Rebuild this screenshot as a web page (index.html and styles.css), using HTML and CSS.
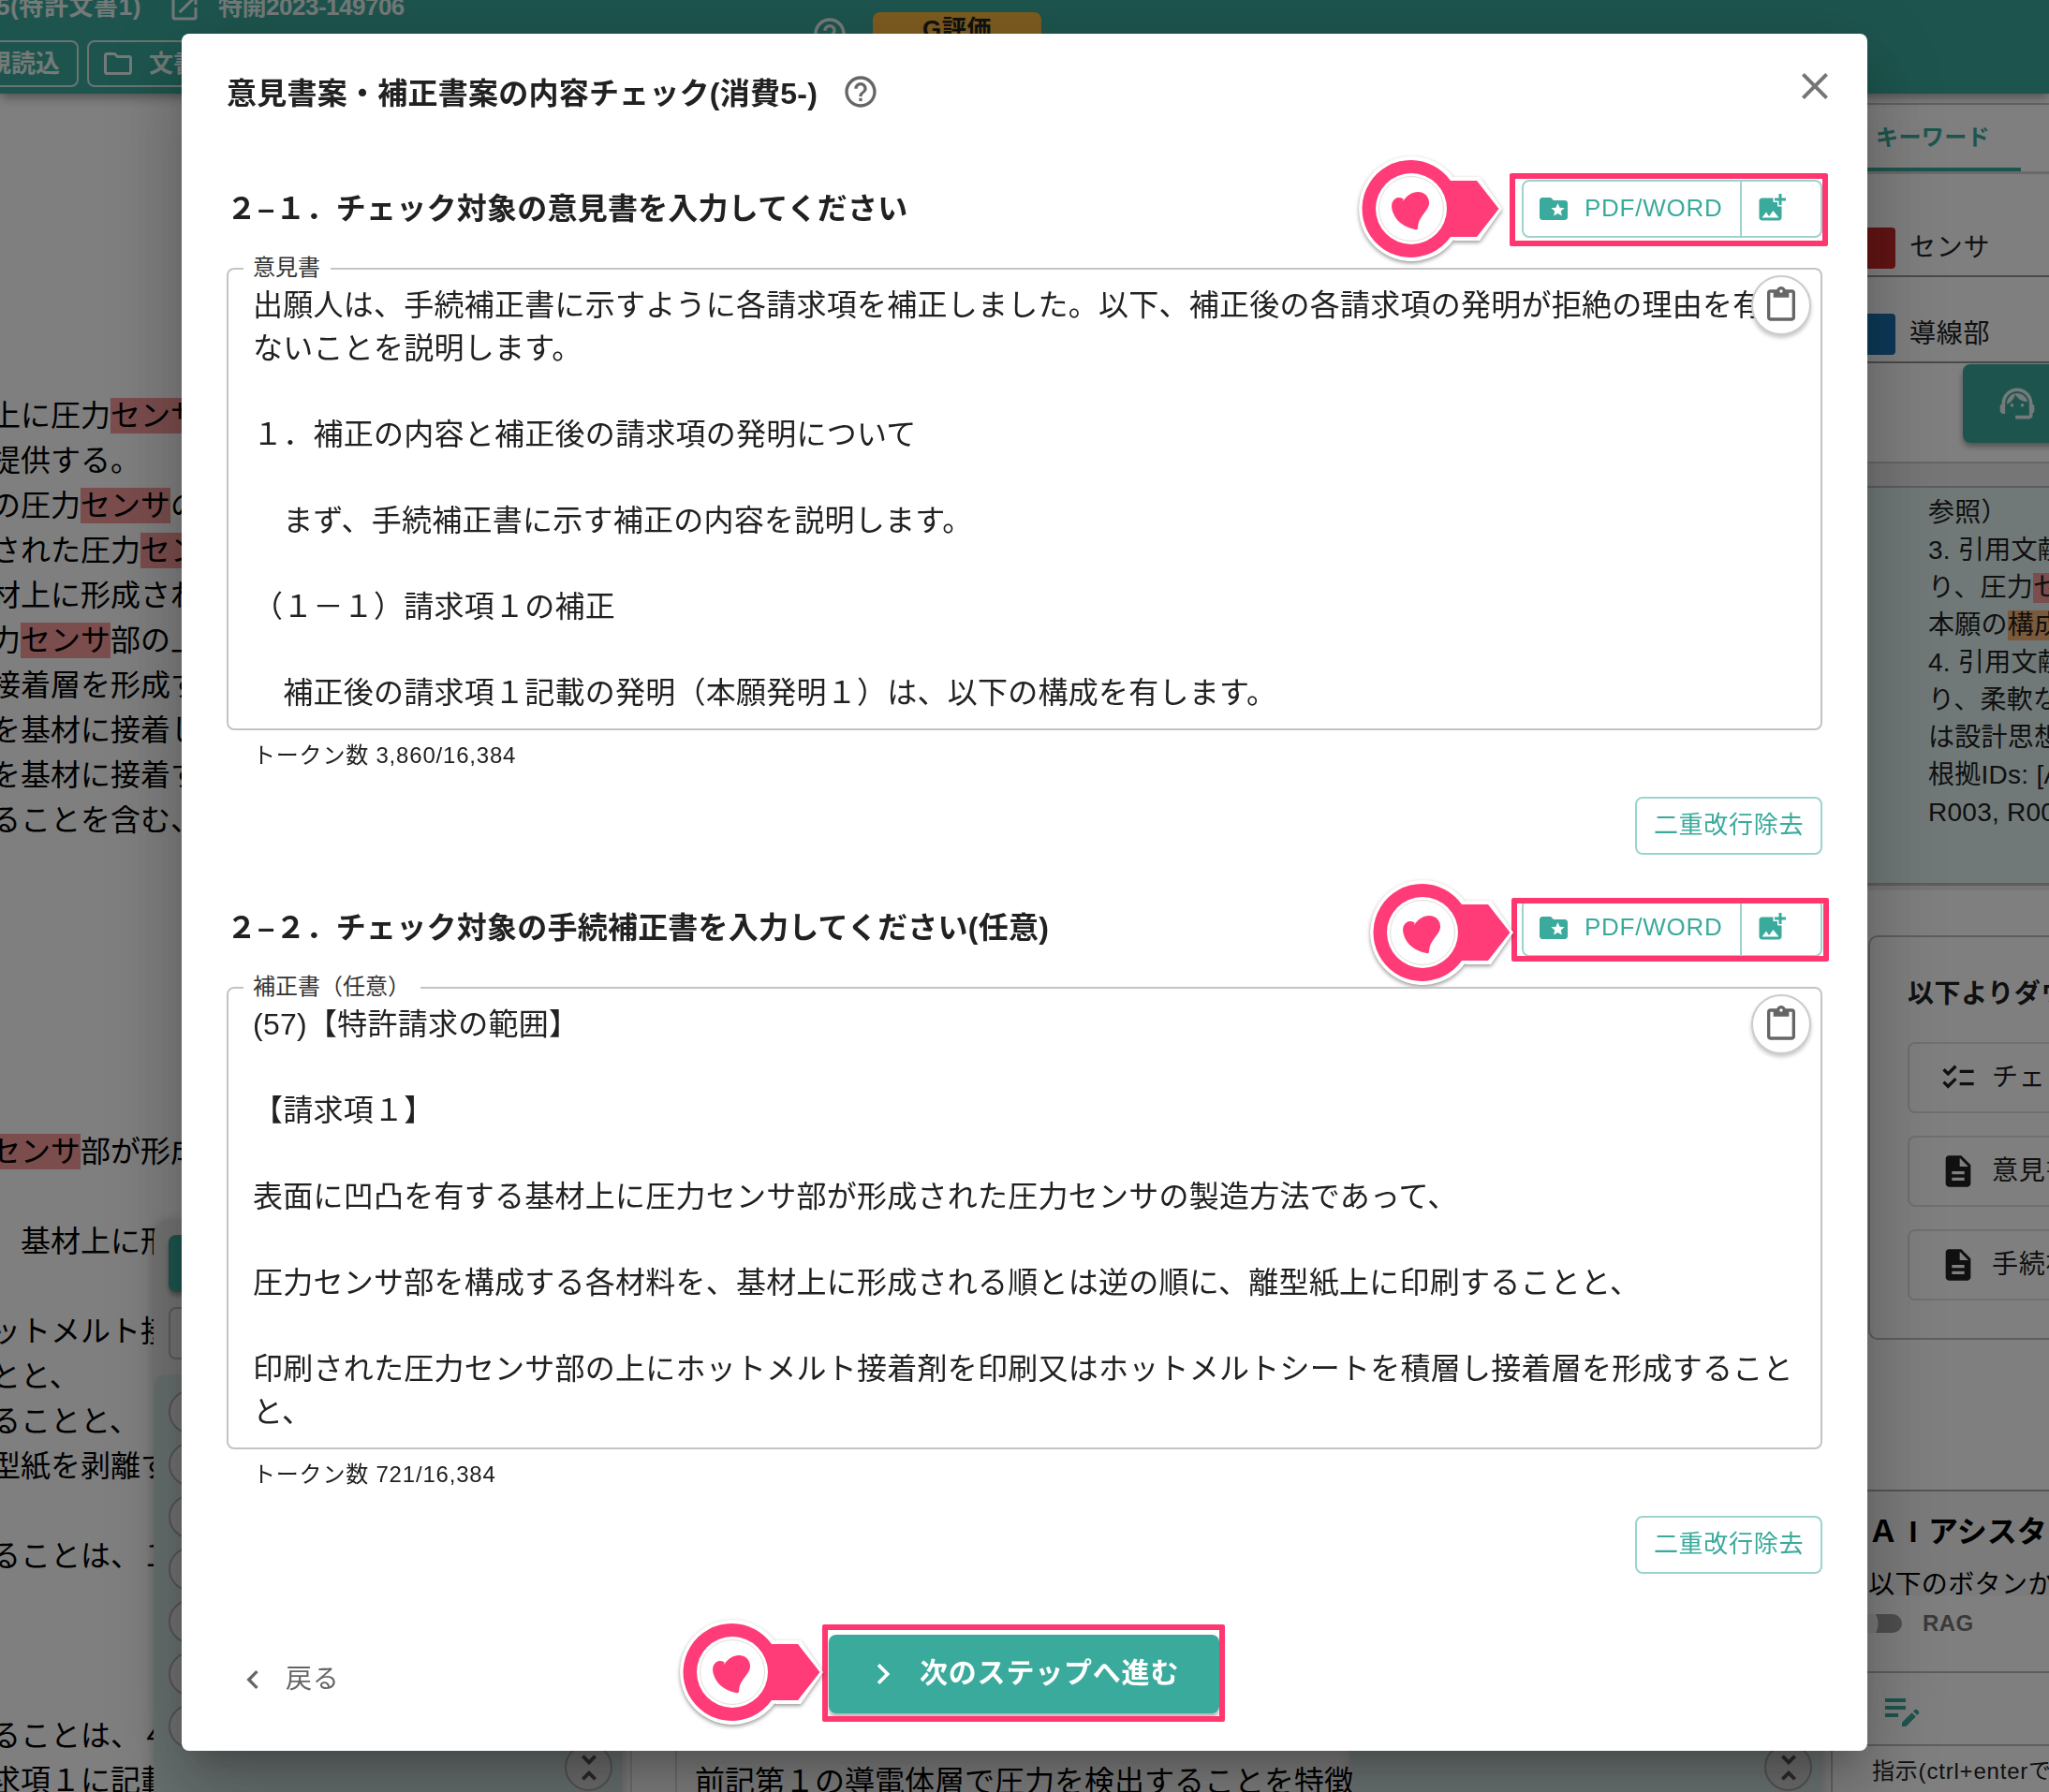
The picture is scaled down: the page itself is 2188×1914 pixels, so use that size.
FILE: index.html
```html
<!DOCTYPE html>
<html lang="ja">
<head>
    <meta charset="UTF-8">
    <title>意見書案・補正書案の内容チェック</title>
    <link rel="stylesheet" href="styles.css">
</head>
<body>
    <!-- アイコン定義 -->
    <svg class="defs" width="0" height="0">
        <symbol id="i-help" viewBox="0 0 24 24"><path d="M11 18h2v-2h-2zm1-16C6.48 2 2 6.48 2 12s4.48 10 10 10 10-4.48 10-10S17.52 2 12 2m0 18c-4.41 0-8-3.59-8-8s3.59-8 8-8 8 3.59 8 8-3.59 8-8 8m0-14c-2.21 0-4 1.79-4 4h2c0-1.1.9-2 2-2s2 .9 2 2c0 2-3 1.75-3 5h2c0-2.25 3-2.5 3-5 0-2.21-1.79-4-4-4"/></symbol>
        <symbol id="i-close" viewBox="0 0 24 24"><path d="M19 6.41 17.59 5 12 10.59 6.41 5 5 6.41 10.59 12 5 17.59 6.41 19 12 13.41 17.59 19 19 17.59 13.41 12z"/></symbol>
        <symbol id="i-paste" viewBox="0 0 24 24"><path d="M19 2h-4.18C14.4.84 13.3 0 12 0S9.6.84 9.18 2H5c-1.1 0-2 .9-2 2v16c0 1.1.9 2 2 2h14c1.1 0 2-.9 2-2V4c0-1.1-.9-2-2-2m-7 0c.55 0 1 .45 1 1s-.45 1-1 1-1-.45-1-1 .45-1 1-1m7 18H5V4h2v3h10V4h2z"/></symbol>
        <symbol id="i-folder-star" viewBox="0 0 24 24"><path d="M20 6h-8l-2-2H4c-1.1 0-1.99.9-1.99 2L2 18c0 1.1.9 2 2 2h16c1.1 0 2-.9 2-2V8c0-1.1-.9-2-2-2m-2.06 11L15 15.28 12.06 17l.78-3.33-2.59-2.24 3.41-.29L15 8l1.34 3.14 3.41.29-2.59 2.24z"/></symbol>
        <symbol id="i-add-photo" viewBox="0 0 24 24"><path d="M19 7v2.99s-1.99.01-2 0V7h-3s.01-1.99 0-2h3V2h2v3h3v2zm-3 4V8h-3V5H5c-1.1 0-2 .9-2 2v12c0 1.1.9 2 2 2h12c1.1 0 2-.9 2-2v-8zM5 19l3-4 2 3 3-4 4 5z"/></symbol>
        <symbol id="i-left" viewBox="0 0 24 24"><path d="M15.41 7.41 14 6l-6 6 6 6 1.41-1.41L10.83 12z"/></symbol>
        <symbol id="i-right" viewBox="0 0 24 24"><path d="M10 6 8.59 7.41 13.17 12l-4.58 4.59L10 18l6-6z"/></symbol>
        <symbol id="i-folder" viewBox="0 0 24 24"><path d="m9.17 6 2 2H20v10H4V6zM10 4H4c-1.1 0-1.99.9-1.99 2L2 18c0 1.1.9 2 2 2h16c1.1 0 2-.9 2-2V8c0-1.1-.9-2-2-2h-8z"/></symbol>
        <symbol id="i-open" viewBox="0 0 24 24"><path d="M19 19H5V5h7V3H5c-1.11 0-2 .9-2 2v14c0 1.1.89 2 2 2h14c1.1 0 2-.9 2-2v-7h-2zM14 3v2h3.59l-9.83 9.83 1.41 1.41L19 6.41V10h2V3z"/></symbol>
        <symbol id="i-agent" viewBox="0 0 24 24"><path d="M21 12.22C21 6.73 16.74 3 12 3c-4.69 0-9 3.65-9 9.28-.6.34-1 .98-1 1.72v2c0 1.1.9 2 2 2h1v-6.1c0-3.87 3.13-7 7-7s7 3.13 7 7V19h-8v2h8c1.1 0 2-.9 2-2v-1.22c.59-.31 1-.92 1-1.64v-2.3c0-.7-.41-1.31-1-1.62"/><circle cx="9" cy="13" r="1"/><circle cx="15" cy="13" r="1"/><path d="M18 11.03C17.52 8.18 15.04 6 12.05 6c-3.03 0-6.29 2.51-6.03 6.45 2.47-1.01 4.33-3.21 4.86-5.89 1.31 2.63 4 4.44 7.12 4.47"/></symbol>
        <symbol id="i-checklist" viewBox="0 0 24 24"><path d="M22 7h-9v2h9zm0 8h-9v2h9zM5.54 11 2 7.46l1.41-1.41 2.12 2.12 4.24-4.24 1.41 1.41zm0 8L2 15.46l1.41-1.41 2.12 2.12 4.24-4.24 1.41 1.41z"/></symbol>
        <symbol id="i-doc" viewBox="0 0 24 24"><path d="M14 2H6c-1.1 0-1.99.9-1.99 2L4 20c0 1.1.89 2 1.99 2H18c1.1 0 2-.9 2-2V8zm2 16H8v-2h8zm0-4H8v-2h8zm-3-5V3.5L18.5 9z"/></symbol>
        <symbol id="i-edit-note" viewBox="0 0 24 24"><path d="M3 10h11v2H3zm0-2h11V6H3zm0 8h7v-2H3zm15.01-3.13.71-.71c.39-.39 1.02-.39 1.41 0l.71.71c.39.39.39 1.02 0 1.41l-.71.71zm-.71.71-5.3 5.3V21h2.12l5.3-5.3z"/></symbol>
        <symbol id="i-unfold" viewBox="0 0 24 24"><path d="M7.41 18.59 8.83 20 12 16.83 15.17 20l1.41-1.41L12 14zm9.18-13.18L15.17 4 12 7.17 8.83 4 7.41 5.41 12 10z"/></symbol>
        <symbol id="i-pin" viewBox="0 0 164 120">
            <path d="M60 4A56 56 0 1 0 105 93.500L107 94H133L157 60 133 26H107L105 26.500A56 56 0 0 0 60 4z" fill="#fff"/>
            <path d="M60 8A52 52 0 1 0 102 90H130L153.500 60 130 30H102A52 52 0 0 0 60 8z" fill="#ff3b78"/>
            <circle cx="60" cy="60" r="38" fill="#fff"/>
            <circle cx="60" cy="60" r="34.500" fill="none" stroke="#ddd" stroke-width="1"/>
            <path d="M51.500 51.500C55 46 61 42 67 42 75 42 79.500 48 79 54.500 78.500 62 68.500 68 67.300 77.500 67 80.500 67.200 82.300 65 82.200 57 81 48.500 76.500 44 70.500 40.500 65.500 38.500 59.500 39.200 55.500 40 50.500 43.500 48 47 48 49.500 48 51.800 49 52 50.500 50.800 50.300 50 51 51.500 51.500z" fill="#ff3b78"/>
        </symbol>
    </svg>

    <div class="app">
        <header class="header">
            <div class="header-row">
                <b>5(特許文書1)</b>
                <svg class="ic open"><use href="#i-open"/></svg>
                <b class="pub">特開2023-149706</b>
                <svg class="ic help"><use href="#i-help"/></svg>
                <div class="g-btn">G評価</div>
            </div>
            <div class="header-btns">
                <div class="h-btn first">規読込</div>
                <div class="h-btn"><svg class="ic"><use href="#i-folder"/></svg>文書</div>
            </div>
        </header>

        <main class="main">
            <section class="doc">
                <div class="doc-text">上に圧力<mark>センサ</mark>
提供する。
の圧力<mark>センサ</mark>の
された圧力<mark>センサ</mark>
材上に形成され
力<mark>センサ</mark>部の上
接着層を形成す
を基材に接着し
を基材に接着す
ることを含む、</div>
                <div class="doc-text claims"><mark>センサ</mark>部が形成

　基材上に形成

ットメルト接着
とと、
ることと、
型紙を剥離する

ることは、１



ることは、４
求項１に記載</div>
                <!-- 左の浮動パネル -->
                <div class="float left">
                    <div class="float-head">
                        <div class="float-btn"></div>
                        <div class="float-input"></div>
                    </div>
                    <div class="float-body">
                        <i></i><i></i><i></i><i></i><i></i><i></i><i></i>
                    </div>
                    <div class="fold"><svg class="ic"><use href="#i-unfold"/></svg></div>
                </div>
            </section>

            <section class="doc2">
                <p>前記第１の導電体層で圧力を検出することを特徴</p>
                <div class="float mid">
                    <div class="fold"><svg class="ic"><use href="#i-unfold"/></svg></div>
                </div>
            </section>

            <aside class="side">
                <div class="tab">キーワード</div>
                <div class="kw-list">
                    <div class="kw"><span class="chip red"></span>センサ</div>
                    <div class="kw"><span class="chip blue"></span>導線部</div>
                </div>
                <div class="agent"><div class="agent-btn"><svg class="ic"><use href="#i-agent"/></svg></div></div>
                <div class="band"></div>
                <div class="answer">参照）
3. 引用文献
り、圧力<mark>センサ</mark>
本願の<mark class="orange">構成</mark>
4. 引用文献
り、柔軟な
は設計思想
根拠IDs: [A001
R003, R004</div>
                <div class="band thin"></div>
                <div class="dl">
                    <b>以下よりダウン</b>
                    <div class="dl-btn"><svg class="ic"><use href="#i-checklist"/></svg>チェック</div>
                    <div class="dl-btn"><svg class="ic"><use href="#i-doc"/></svg>意見書</div>
                    <div class="dl-btn"><svg class="ic"><use href="#i-doc"/></svg>手続補正</div>
                </div>
                <div class="assist">
                    <b>Ａ<span class="wide">I</span>アシスタ</b>
                    <p>以下のボタンから</p>
                </div>
                <div class="rag"><span class="switch"></span>RAG</div>
                <div class="tools"><svg class="ic"><use href="#i-edit-note"/></svg></div>
                <div class="prompt">指示(ctrl+enterで</div>
            </aside>
        </main>
    </div>

    <div class="backdrop"></div>

    <div class="dialog">
        <div class="dialog-title">
            <h2>意見書案・補正書案の内容チェック(消費5-)</h2>
            <svg class="ic help"><use href="#i-help"/></svg>
            <svg class="ic close"><use href="#i-close"/></svg>
        </div>

        <div class="block">
            <div class="block-head">
                <h3>２<span class="dash">–</span>１．チェック対象の意見書を入力してください</h3>
                <div class="btn-group">
                    <div class="btn-pdf"><svg class="ic"><use href="#i-folder-star"/></svg><span>PDF/WORD</span></div>
                    <div class="btn-img"><svg class="ic"><use href="#i-add-photo"/></svg></div>
                    <span class="frame f1"></span>
                    <svg class="pin p1"><use href="#i-pin"/></svg>
                </div>
            </div>
            <div class="field">
                <label>意見書</label>
                <div class="text">出願人は、手続補正書に示すように各請求項を補正しました。以下、補正後の各請求項の発明が拒絶の理由を有し
ないことを説明します。

１．補正の内容と補正後の請求項の発明について

　まず、手続補正書に示す補正の内容を説明します。

（１－１）請求項１の補正

　補正後の請求項１記載の発明（本願発明１）は、以下の構成を有します。</div>
                <div class="paste"><svg class="ic"><use href="#i-paste"/></svg></div>
            </div>
            <div class="token">トークン数 3,860/16,384</div>
            <div class="btn-outline">二重改行除去</div>
        </div>

        <div class="block">
            <div class="block-head">
                <h3>２<span class="dash">–</span>２．チェック対象の手続補正書を入力してください(任意)</h3>
                <div class="btn-group">
                    <div class="btn-pdf"><svg class="ic"><use href="#i-folder-star"/></svg><span>PDF/WORD</span></div>
                    <div class="btn-img"><svg class="ic"><use href="#i-add-photo"/></svg></div>
                    <span class="frame f2"></span>
                    <svg class="pin p2"><use href="#i-pin"/></svg>
                </div>
            </div>
            <div class="field">
                <label>補正書（任意）</label>
                <div class="text">(57)【特許請求の範囲】

【請求項１】

表面に凹凸を有する基材上に圧力センサ部が形成された圧力センサの製造方法であって、

圧力センサ部を構成する各材料を、基材上に形成される順とは逆の順に、離型紙上に印刷することと、

印刷された圧力センサ部の上にホットメルト接着剤を印刷又はホットメルトシートを積層し接着層を形成すること
と、</div>
                <div class="paste"><svg class="ic"><use href="#i-paste"/></svg></div>
            </div>
            <div class="token">トークン数 721/16,384</div>
            <div class="btn-outline">二重改行除去</div>
        </div>

        <div class="actions">
            <div class="back"><svg class="ic"><use href="#i-left"/></svg>戻る</div>
            <div class="next"><svg class="ic"><use href="#i-right"/></svg><span>次のステップへ進む</span>
                <span class="frame f3"></span>
                <svg class="pin p3"><use href="#i-pin"/></svg>
            </div>
        </div>
    </div>
</body>
</html>
```

FILE: styles.css
```css
* {
    box-sizing: border-box;
}

body {
    margin: 0;
    width: 2188px;
    height: 1914px;
    overflow: hidden;
    font-family: "Liberation Sans", "Noto Sans CJK JP", sans-serif;
    color: #212121;
    text-spacing-trim: space-all;
    white-space: nowrap;
}
h2, h3, p {
    margin: 0;
}
.defs {
    position: absolute;
}
.ic {
    display: block;
    flex: none;
    width: 40px;
    height: 40px;
    fill: currentColor;
}

/* ===== 背景のアプリ ===== */
.app {
    height: 1914px;
    display: flex;
    flex-direction: column;
    background: #fff;
    overflow: hidden;
}
.header {
    position: relative;
    z-index: 1;
    height: 100px;
    flex: none;
    background: #3aaa9c;
    color: #e8f4f2;
    box-shadow: 0 4px 8px -2px rgba(0,0,0,.25), 0 8px 10px rgba(0,0,0,.14);
}
.header-row {
    display: flex;
    height: 43px;
    margin-left: -4px;
    font-size: 26px;
    letter-spacing: .6px;
    line-height: 14px;
}
.header-row .pub {
    width: 202px;
    letter-spacing: -.5px;
}
.header-row .open {
    width: 36px;
    height: 36px;
    margin: -10px 18px 0 28px;
}
.header-row .help {
    margin: 16px 26px 0 auto;
}
.g-btn {
    width: 180px;
    height: 60px;
    margin: 13px 1076px 0 0;
    border-radius: 8px;
    background: #fab83f;
    color: #222;
    font-weight: bold;
    line-height: 37px;
    text-align: center;
}
.header-btns {
    display: flex;
    gap: 9px;
    margin-left: -60px;
}
.h-btn {
    display: flex;
    align-items: center;
    gap: 15px;
    height: 50px;
    width: 200px;
    padding-left: 13px;
    border: 2px solid #d5e8e5;
    border-radius: 8px;
    font-size: 26px;
    font-weight: bold;
    line-height: 46px;
}
.h-btn .ic {
    width: 36px;
    height: 36px;
}
.h-btn.first {
    width: 144px;
    padding: 0 18px 0 0;
    justify-content: flex-end;
}

.main {
    flex: 1;
    display: grid;
    grid-template-columns: 675px 1280px 340px;
}
.doc {
    position: relative;
    overflow: hidden;
    border-right: 2px solid #ddd;
    padding-top: 320px;
}
.doc-text {
    margin-left: -10px;
    font-size: 32px;
    line-height: 48px;
    color: #000;
    white-space: pre;
}
.claims {
    margin-top: 306px;
}
mark {
    display: inline-block;
    line-height: 38px;
    color: inherit;
    background: #f69a9a;
}
mark.orange {
    background: #f7b377;
}

.float {
    position: absolute;
    background: #e9e6e6;
    box-shadow: 0 2px 14px rgba(0,0,0,.22);
}
.float.left {
    left: 164px;
    top: 1203px;
    width: 500px;
    height: 640px;
    border-radius: 16px;
}
.float-head {
    height: 165px;
    padding: 16px;
}
.float-btn {
    height: 61px;
    border-radius: 8px;
    background: #3aaa9c;
    box-shadow: 0 4px 5px rgba(0,0,0,.3);
}
.float-input {
    height: 56px;
    margin-top: 16px;
    border: 2px solid #b5b5b5;
    border-radius: 8px;
}
.float-body {
    display: flex;
    flex-direction: column;
    gap: 8px;
    height: 475px;
    padding: 16px;
    border-radius: 12px;
    background: #cfe1de;
}
.float-body i {
    width: 48px;
    height: 48px;
    border: 2px solid #aaa;
    border-radius: 50%;
    background: #e4e4e4;
}
.fold {
    position: absolute;
    right: 10px;
    top: 559px;
    width: 51px;
    height: 51px;
    padding: 4px;
    border: 2px solid #aaa;
    border-radius: 50%;
    background: #ddd;
    color: #555;
}
.fold .ic {
    stroke: currentColor;
    stroke-width: .4;
}

.doc2 {
    position: relative;
    display: flex;
    align-items: flex-end;
    margin-left: 46px;
    border-left: 2px solid #ddd;
}
.doc2 p {
    margin: 0 0 -10px 19px;
    padding-bottom: 9px;
    font-size: 32px;
    line-height: 48px;
    color: #000;
}
.float.mid {
    left: 721px;
    top: 1203px;
    width: 501px;
    height: 640px;
    background: #d8eae7;
}

/* 右サイド */
.side {
    display: flex;
    flex-direction: column;
    padding-top: 10px;
    border-left: 2px solid #c8c8c8;
    overflow: hidden;
}
.side > * {
    flex: none;
}
.tab {
    height: 76px;
    padding-left: 46px;
    border-top: 2px solid #c8c8c8;
    border-bottom: 3px solid #d5d5d5;
    font-size: 24px;
    font-weight: bold;
    letter-spacing: .4px;
    line-height: 69px;
    color: #3aaa9c;
    background: linear-gradient(#3aaa9c, #3aaa9c) 0 100% / 201px 4px no-repeat;
}
.kw-list {
    padding-top: 18px;
}
.kw {
    display: flex;
    align-items: center;
    gap: 15px;
    height: 92px;
    padding: 36px 0 5px;
    border-bottom: 2px solid #949494;
    font-size: 28px;
    letter-spacing: .8px;
    line-height: 40px;
}
.chip {
    width: 67px;
    height: 44px;
    border-radius: 4px;
}
.chip.red {
    background: #c62828;
}
.chip.blue {
    background: #1b72b0;
}
.agent {
    height: 107px;
    padding: 1px 0 0 139px;
    border-bottom: 2px solid #ccc;
}
.agent-btn {
    height: 84px;
    padding: 20px 36px;
    border-radius: 8px;
    background: #3aaa9c;
    color: #e8f4f2;
    box-shadow: 0 4px 6px rgba(0,0,0,.35);
}
.agent-btn .ic {
    width: 44px;
    height: 44px;
}
.band {
    height: 26px;
    background: #ececec;
    border-bottom: 2px solid #bbb;
}
.answer {
    height: 422px;
    padding: 7px 0 0 102px;
    background: #e0f2f1;
    font-size: 28px;
    letter-spacing: .26px;
    line-height: 40px;
    white-space: pre;
}
.answer mark {
    line-height: 32px;
}
.band.thin {
    height: 8px;
    border-top: 3px solid #bbb;
    border-bottom: 0;
}
.dl {
    height: 432px;
    margin: 48px 0 0 38px;
    padding: 41px 0 0 40px;
    border: 2px solid #bdbdbd;
    border-radius: 10px;
}
.dl b {
    display: block;
    height: 71px;
    font-size: 28px;
    letter-spacing: .6px;
    line-height: 40px;
}
.dl-btn {
    display: flex;
    align-items: center;
    gap: 16px;
    height: 76px;
    margin-bottom: 24px;
    padding-left: 32px;
    border: 2px solid #e0e0e0;
    border-radius: 8px;
    font-size: 28px;
    letter-spacing: .8px;
    line-height: 40px;
}
.assist {
    height: 113px;
    margin-top: 160px;
    padding: 20px 0 0 38px;
    border-top: 2px solid #aaa;
    background: #f7f7f7;
    overflow: hidden;
    color: #000;
}
.assist b {
    display: block;
    font-size: 32px;
    line-height: 46px;
}
.wide {
    display: inline-block;
    width: 32px;
    text-align: center;
}
.assist p {
    padding-top: 14px;
    font-size: 28px;
    letter-spacing: .4px;
    line-height: 40px;
}
.rag {
    display: flex;
    align-items: center;
    gap: 22px;
    height: 83px;
    padding: 0 0 21px 24px;
    border-bottom: 2px solid #bbb;
    font-size: 24px;
    font-weight: bold;
    letter-spacing: .4px;
    color: #757575;
}
.switch {
    width: 50px;
    height: 20px;
    border-radius: 10px;
    background: radial-gradient(circle at 4px 10px, #eee 20px, #9e9e9e 21px);
}
.tools {
    height: 78px;
    padding: 15px 0 0 50px;
    border-bottom: 2px solid #bbb;
    color: #3aaa9c;
}
.tools .ic {
    width: 48px;
    height: 48px;
}
.prompt {
    padding-left: 42px;
    font-size: 24px;
    letter-spacing: .8px;
    line-height: 54px;
}

.backdrop {
    position: fixed;
    inset: 0;
    z-index: 5;
    background: rgba(0,0,0,.5);
}

/* ===== ダイアログ ===== */
.dialog {
    position: fixed;
    z-index: 10;
    left: 194px;
    top: 36px;
    width: 1800px;
    height: 1834px;
    padding: 0 48px;
    border-radius: 8px;
    background: #fff;
    box-shadow: 0 22px 30px -14px rgba(0,0,0,.2), 0 48px 76px 6px rgba(0,0,0,.14), 0 18px 92px 16px rgba(0,0,0,.12);
}
.dialog-title {
    display: flex;
    align-items: center;
    height: 124px;
}
.dialog-title h2 {
    font-size: 32px;
    letter-spacing: .24px;
    line-height: 48px;
    padding-top: 3px;
}
.dialog-title .help {
    margin-left: 26px;
    color: #666;
}
.dialog-title .close {
    width: 48px;
    height: 48px;
    margin: -12px -16px 0 auto;
    color: #757575;
}

.block {
    height: 768px;
    padding-top: 32px;
}
.block-head {
    display: flex;
    align-items: center;
    justify-content: space-between;
    height: 62px;
    margin-bottom: 32px;
}
.block-head h3 {
    font-size: 32px;
    letter-spacing: .24px;
    line-height: 48px;
}
.dash {
    display: inline-block;
    width: 20px;
    letter-spacing: 0;
    text-align: center;
}
.btn-group {
    position: relative;
    display: flex;
    width: 321px;
    height: 62px;
    border: 2px solid #9cd4cd;
    border-radius: 8px;
    color: #3aaa9c;
}
.btn-pdf {
    display: flex;
    align-items: center;
    gap: 15px;
    width: 233px;
    padding-left: 14px;
    border-right: 2px solid #9cd4cd;
    font-size: 26px;
    letter-spacing: .74px;
}
.btn-pdf span {
    padding-bottom: 1px;
}
.btn-pdf .ic,
.btn-img .ic {
    width: 36px;
    height: 36px;
}
.btn-img {
    padding: 10px 0 0 14px;
}

.field {
    position: relative;
    height: 494px;
    padding: 15px 26px 13px;
    border: 2px solid #c4c4c4;
    border-radius: 8px;
}
.field label {
    position: absolute;
    left: 16px;
    top: -20px;
    padding: 0 11px 0 10px;
    background: #fff;
    font-size: 24px;
    line-height: 36px;
    color: #333;
}
.text {
    font-size: 32px;
    letter-spacing: .25px;
    line-height: 46px;
    white-space: pre;
}
.paste {
    position: absolute;
    right: 10px;
    top: 6px;
    width: 64px;
    height: 64px;
    padding: 10px;
    border: 2px solid #ccc;
    border-radius: 50%;
    background: #fff;
    color: #666;
    box-shadow: 0 3px 4px rgba(0,0,0,.22);
}
.token {
    padding: 9px 0 0 28px;
    font-size: 24px;
    letter-spacing: .8px;
    line-height: 36px;
}
.btn-outline {
    width: 200px;
    height: 62px;
    margin: 26px 0 0 auto;
    border: 2px solid #9cd4cd;
    border-radius: 8px;
    font-size: 26px;
    letter-spacing: .7px;
    line-height: 56px;
    text-align: center;
    color: #3aaa9c;
}

.actions {
    position: relative;
    display: flex;
    align-items: center;
    height: 84px;
    margin-top: 50px;
}
.back {
    display: flex;
    align-items: center;
    width: 643px;
    padding: 12px 0 0 8px;
    gap: 15px;
    font-size: 28px;
    letter-spacing: .8px;
    line-height: 40px;
    color: #666;
}
.next {
    position: relative;
    display: flex;
    align-items: center;
    gap: 17px;
    width: 417px;
    height: 84px;
    padding: 0 0 0 36px;
    border-radius: 8px;
    background: #3aaa9c;
    box-shadow: 0 4px 5px rgba(0,0,0,.3);
    color: #fff;
    font-size: 30px;
    font-weight: bold;
    letter-spacing: .8px;
    line-height: 40px;
}
.next > span:first-of-type {
    padding-bottom: 2px;
}
.next .ic {
    width: 44px;
    height: 44px;
}

/* 注目マーク(ピンクの枠とピン) */
.frame {
    position: absolute;
    border: 6px solid #ff366f;
    border-radius: 2px;
}
.f1 {
    left: -15px;
    top: -9px;
    width: 340px;
    height: 78px;
}
.f2 {
    left: -13px;
    top: -3px;
    width: 339px;
    height: 68px;
}
.f3 {
    left: -7px;
    top: -11px;
    width: 430px;
    height: 104px;
}
.pin {
    position: absolute;
    width: 164px;
    height: 120px;
    overflow: visible;
    filter: drop-shadow(0 2px 2px rgba(0,0,0,.4));
}
.p1 {
    left: -180px;
    top: -31px;
}
.p2 {
    left: -168px;
    top: -26px;
}
.p3 {
    left: -163px;
    top: -20px;
}
```
